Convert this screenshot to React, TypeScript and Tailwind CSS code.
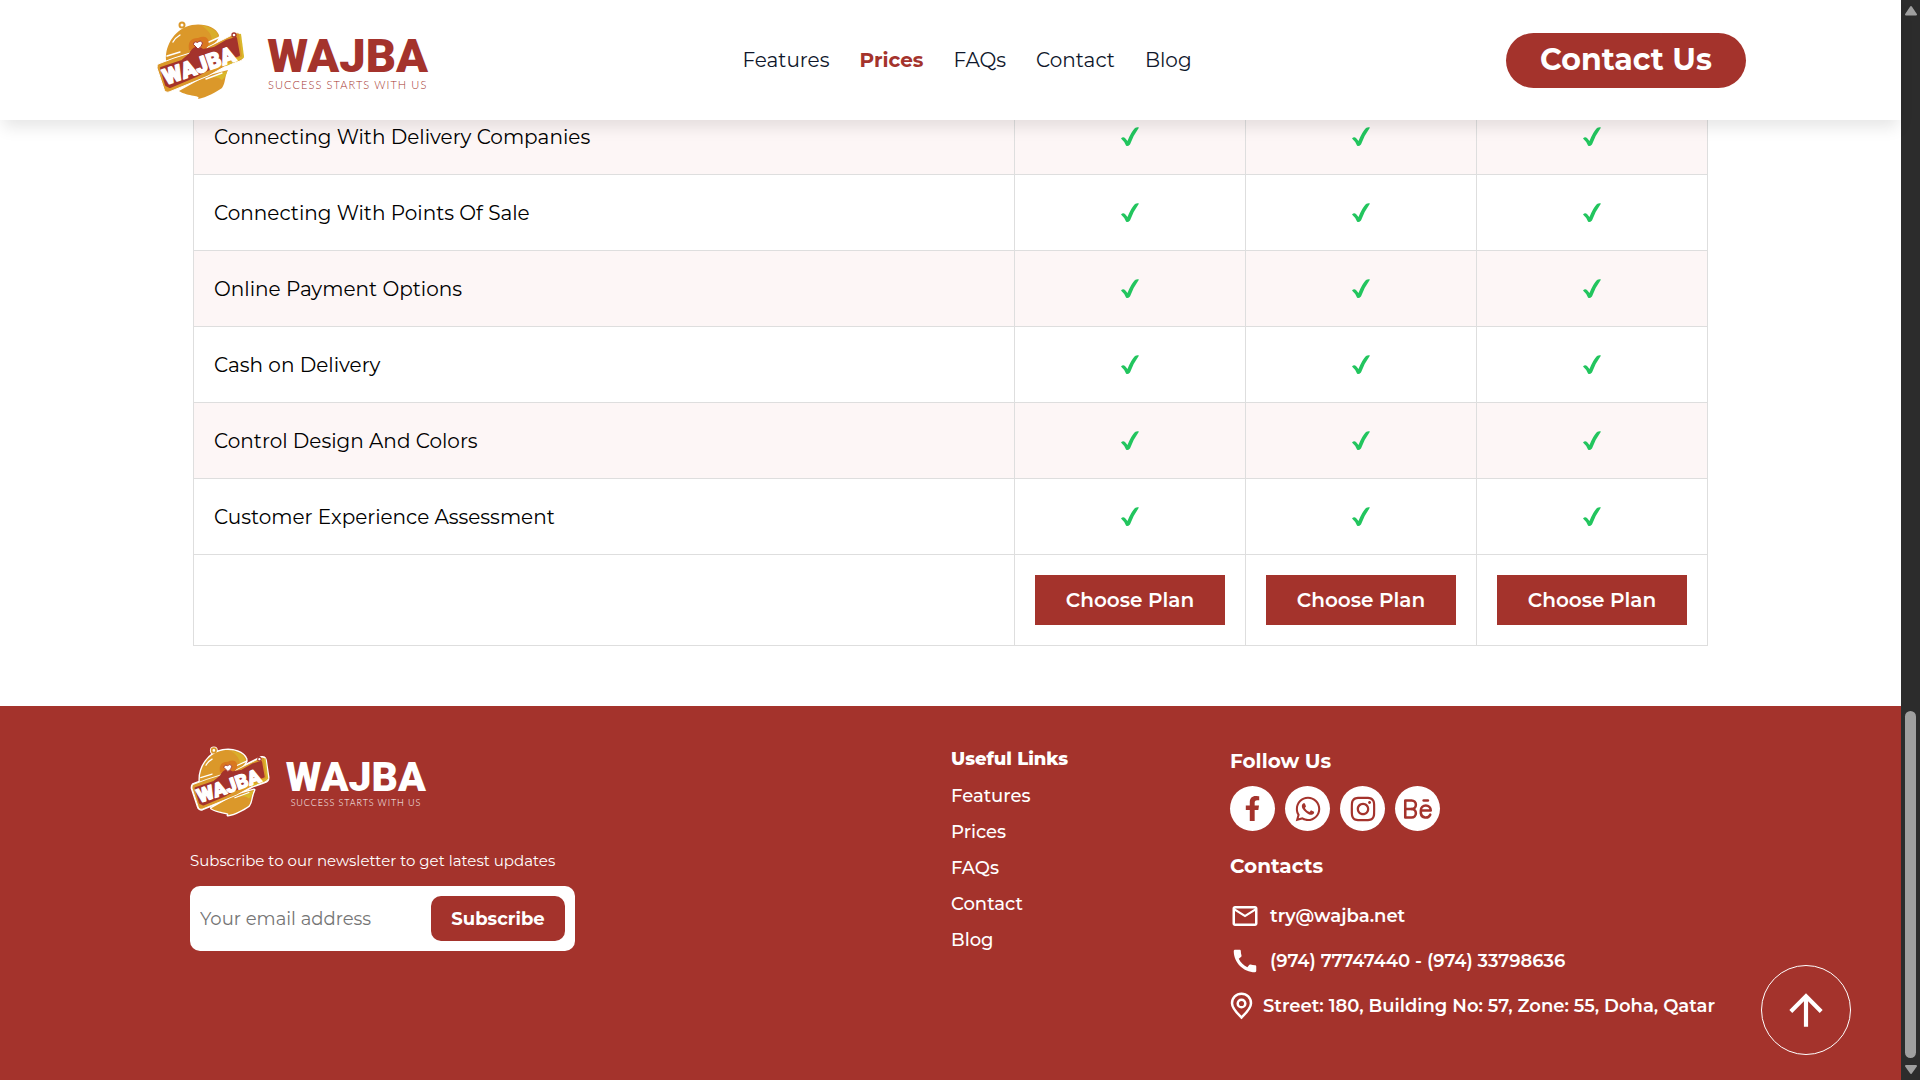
import React from "react";
import { FaFacebookF, FaWhatsapp, FaInstagram } from "react-icons/fa";
import { MdOutlineEmail, MdCall, MdArrowUpward } from "react-icons/md";
import { TbBrandBehance } from "react-icons/tb";

const NAV = ["Features", "Prices", "FAQs", "Contact", "Blog"];
const FEATURES = [
  "Connecting With Delivery Companies",
  "Connecting With Points Of Sale",
  "Online Payment Options",
  "Cash on Delivery",
  "Control Design And Colors",
  "Customer Experience Assessment",
];
const PLANS = ["basic", "standard", "premium"];
const SOCIAL = [
  { name: "Facebook", icon: <FaFacebookF size={25} /> },
  { name: "WhatsApp", icon: <FaWhatsapp size={28} /> },
  { name: "Instagram", icon: <FaInstagram size={28} /> },
  { name: "Behance", icon: <TbBrandBehance size={34} strokeWidth={1.8} /> },
];

const DOME = "M10 40C9 24 20 8 36 5C48 3 60 7 63 15C63 22 56 25 50 28L10 41Z";
const BASE = "M23 71C32 77 46 75 42 79C50 78 62 71 66 68C70 62 68 58 72 50L50 56Z";
const BAND = "M2 44L18 38L50 28L80 13Q84 12 85 16L88 36Q88 40 84 41L70 46L52 56L13 72Q9 73 8 69L1 48Q1 45 2 44Z";
const PLATE = "M5 48L26 41L34 34Q39 24 47 30L58 28L70 21L80 18L83 35L68 41L55 48L40 56L14 67L10 65Z";

/* Cloche emblem; the rim is a thin line around the whole silhouette. */
function LogoMark({ rim, className }: { rim: string; className: string }) {
  return (
    <svg viewBox="-1 0 92 81" className={className} aria-hidden="true">
      <g stroke={rim} strokeWidth="3" strokeLinejoin="round" fill={rim}>
        <circle cx="26" cy="5" r="3" />
        <path d={DOME} />
        <path d={BASE} />
        <path d={BAND} />
      </g>
      <circle cx="26" cy="5" r="2.5" fill="#fff" stroke="#db982a" strokeWidth="2" />
      <path d={DOME} fill="#db982a" />
      <path d="M45 5Q60 8 62 15Q62 19 55 22Q58 14 45 5Z" fill="#d9ae2b" />
      <path d={BASE} fill="#db982a" />
      <path d="M54 58L71 51Q70 57 66 60Q62 56 54 58Z" fill="#d9b82b" />
      <path d={BAND} fill="#db982a" stroke="#fff" strokeWidth="1" />
      <path d="M70 45L87 37L84 14" fill="none" stroke="#d9b82b" strokeWidth="2" />
      <path d="M33 30Q31 18 42 18Q51 14 53 22Q53 26 48 31Z" fill="#d9781f" />
      <path d={PLATE} fill="#a4332c" stroke="#a4332c" strokeWidth="2" strokeLinejoin="round" />
      <circle cx="78" cy="15" r="2" fill="#fff" stroke="#a4332c" strokeWidth="1.3" />
      <path d="M17 22Q19 18 24 15M11 36L24 32M53 22L64 17M50 59L66 53" stroke="#fff" strokeWidth="1.4" strokeLinecap="round" fill="none" />
      <text
        transform="rotate(-19 10 65)"
        x="10"
        y="65"
        fontFamily="Roboto, sans-serif"
        fontWeight="900"
        fontSize="22"
        fill="#fff"
        stroke="#fff"
        strokeWidth="1.3"
        strokeLinejoin="round"
      >
        WAJBA
      </text>
      <path d="M42 29L37.500 24.500Q38 20.500 41.500 22.500Q44.500 19.500 46.500 23Q46 27 42 29Z" fill="#fff" stroke="#a4332c" strokeWidth="1" />
    </svg>
  );
}

function Check() {
  return (
    <svg viewBox="0 0 18 20" className="mx-auto h-5 w-[18px]" role="img" aria-label="Included">
      <path d="M0 11.500Q2 9.500 4 11L6.500 14Q10 5 14 1Q16 0 18 0.500Q12.500 8 9 17.500Q6.500 20 5 18.500Q3 14 0 11.500Z" fill="#22c55e" />
    </svg>
  );
}

function PinIcon() {
  return (
    <svg viewBox="0 0 23 28" className="h-7 w-[23px] shrink-0" fill="none" stroke="currentColor" strokeWidth="2.500" aria-hidden="true">
      <path d="M11.500 25.500C7 21 2 16.500 2 11.200A9.500 9.500 0 0 1 21 11.200C21 16.500 16 21 11.500 25.500Z" />
      <circle cx="11.500" cy="11.500" r="3.800" />
    </svg>
  );
}

function Scrollbar() {
  return (
    <div className="sticky top-0 flex h-screen w-[19px] shrink-0 flex-col items-center justify-between bg-[#2c2c2c] py-1 text-[#9f9f9f]" aria-hidden="true">
      <svg viewBox="0 0 12 14" className="h-3.5 w-3">
        <path d="M6 3L11 10.500H1Z" fill="currentColor" stroke="currentColor" strokeWidth="2" strokeLinejoin="round" />
      </svg>
      <div className="flex w-full flex-1 flex-col items-center justify-end pb-1">
        <div className="h-1/3 w-[11px] rounded-full bg-[#9f9f9f]" />
      </div>
      <svg viewBox="0 0 12 14" className="h-3.5 w-3">
        <path d="M6 11L11 4H1Z" fill="currentColor" stroke="currentColor" strokeWidth="2" strokeLinejoin="round" />
      </svg>
    </div>
  );
}

export default function App() {
  return (
    <div className="flex min-h-screen bg-white font-['Montserrat',sans-serif] text-black">
      <div className="flex min-w-0 flex-1 flex-col">
        <header className="sticky top-0 z-10 flex h-[120px] items-center justify-between bg-white px-[155px] shadow-[0_10px_15px_-3px_rgba(0,0,0,0.1)]">
          <a href="#home" className="flex w-[273px] items-center justify-between">
            <LogoMark rim="#ffffff" className="h-[81px] w-[92px]" />
            <span className="flex flex-col items-center pt-0.5 text-[#a4332c]">
              <span className="font-['Roboto'] text-[47px] leading-[47px] font-black">WAJBA</span>
              <span className="font-['Lato'] text-[11px] leading-3 font-light tracking-widest">SUCCESS STARTS WITH US</span>
            </span>
          </a>
          <nav className="flex gap-[30px] text-xl text-slate-900">
            {NAV.map((n) => (
              <a key={n} href="#nav" className={n === "Prices" ? "font-bold text-[#a4332c]" : ""}>
                {n}
              </a>
            ))}
          </nav>
          <button className="h-[55px] w-[240px] rounded-full bg-[#a4332c] text-3xl font-bold text-white">Contact Us</button>
        </header>

        <main className="-mt-[22px] px-[193px] pb-[60px]">
          <table className="w-full table-fixed border-collapse text-xl">
            <colgroup>
              <col />
              {PLANS.map((p) => (
                <col key={p} className="w-[231px]" />
              ))}
            </colgroup>
            <tbody>
              {FEATURES.map((f) => (
                <tr key={f} className="h-[76px] odd:bg-[#fdf6f6]">
                  <td className="border border-[#dedede] px-5">{f}</td>
                  {PLANS.map((p) => (
                    <td key={p} className="border border-[#dedede]">
                      <Check />
                    </td>
                  ))}
                </tr>
              ))}
              <tr className="h-[91px]">
                <td className="border border-[#dedede]" />
                {PLANS.map((p) => (
                  <td key={p} className="border border-[#dedede] px-5">
                    <button className="block h-[50px] w-full bg-[#a4332c] font-semibold text-white">Choose Plan</button>
                  </td>
                ))}
              </tr>
            </tbody>
          </table>
        </main>

        <footer className="grid flex-1 grid-cols-[minmax(0,1fr)_279px_481px] content-start bg-[#a4332c] px-[190px] pt-10 text-white">
          <div>
            <a href="#home" className="flex w-[236px] items-center justify-between">
              <LogoMark rim="#ffffff" className="h-[71px] w-[81px]" />
              <span className="flex flex-col items-center pt-0.5">
                <span className="font-['Roboto'] text-[41px] leading-[41px] font-black">WAJBA</span>
                <span className="font-['Lato'] text-[9px] leading-[10px] font-light tracking-widest">SUCCESS STARTS WITH US</span>
              </span>
            </a>
            <form className="mt-8" onSubmit={(e) => e.preventDefault()}>
              <label htmlFor="email" className="block text-[15px] leading-6">
                Subscribe to our newsletter to get latest updates
              </label>
              <div className="mt-[13px] flex h-[65px] w-[385px] items-center gap-2 rounded-[10px] bg-white px-2.5">
                <input id="email" type="email" placeholder="Your email address" className="min-w-0 flex-1 text-lg text-black outline-none placeholder:text-[#757575]" />
                <button className="h-[45px] w-[134px] rounded-[10px] bg-[#a4332c] text-lg font-bold text-white">Subscribe</button>
              </div>
            </form>
          </div>

          <nav aria-labelledby="links" className="text-lg leading-6">
            <h2 id="links" className="leading-[26px] font-extrabold">Useful Links</h2>
            <ul className="mt-3 flex flex-col gap-3 font-medium">
              {NAV.map((n) => (
                <li key={n}>
                  <a href="#nav">{n}</a>
                </li>
              ))}
            </ul>
          </nav>

          <div>
            <h2 className="text-xl leading-[30px] font-bold">Follow Us</h2>
            <ul className="mt-2.5 flex gap-2.5">
              {SOCIAL.map((s) => (
                <li key={s.name}>
                  <a href="#social" aria-label={s.name} className="flex size-[45px] items-center justify-center rounded-full bg-white text-[#a4332c]">
                    {s.icon}
                  </a>
                </li>
              ))}
            </ul>
            <h2 className="mt-5 text-xl leading-[30px] font-bold">Contacts</h2>
            <address className="mt-5 flex flex-col gap-[15px] text-lg leading-[30px] font-semibold whitespace-nowrap not-italic">
              <a href="#mail" className="flex items-center gap-2.5">
                <MdOutlineEmail size={30} />
                try@wajba.net
              </a>
              <a href="#call" className="flex items-center gap-2.5">
                <MdCall size={30} />
                (974) 77747440 - (974) 33798636
              </a>
              <a href="#map" className="flex items-center gap-2.5">
                <PinIcon />
                Street: 180, Building No: 57, Zone: 55, Doha, Qatar
              </a>
            </address>
          </div>
        </footer>
      </div>

      <Scrollbar />
      <button aria-label="Back to top" className="fixed right-[69px] bottom-[25px] flex size-[90px] items-center justify-center rounded-full border border-white text-white">
        <MdArrowUpward size={50} />
      </button>
    </div>
  );
}
